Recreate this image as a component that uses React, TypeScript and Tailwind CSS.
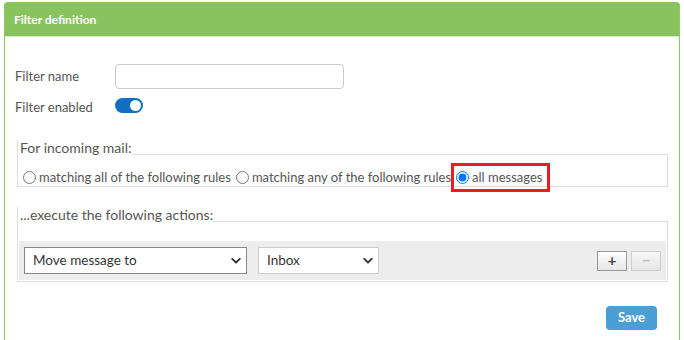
import { useState } from "react";

function Chevron() {
  return (
    <svg width="10" height="7" viewBox="0 0 10 7" className="pointer-events-none absolute right-[6px] top-1/2 -translate-y-1/2">
      <path d="M1.2 1.3 L5 5 L8.8 1.3" fill="none" stroke="#333" strokeWidth="1.8" strokeLinecap="round" strokeLinejoin="round" />
    </svg>
  );
}

function Legend({ text }: { text: string }) {
  return (
    <div className="flex items-end">
      <span className="pl-[2px] text-[14px] leading-[15px] text-[#555] border-l border-[#ddd]">{text}</span>
      <div className="flex-1 border-b border-[#ddd]" />
    </div>
  );
}

function App() {
  const [enabled, setEnabled] = useState(true);
  const [mode, setMode] = useState("all");

  const radio = (value: string, label: string, boxed = false) => (
    <label className="relative flex items-center cursor-pointer">
      <input
        type="radio"
        name="mode"
        checked={mode === value}
        onChange={() => setMode(value)}
        className="m-0 mr-[3px] w-[13px] h-[13px]"
      />
      <span>{label}</span>
      {boxed && (
        <span className="pointer-events-none absolute -left-[5px] -right-[8px] -top-[7px] -bottom-[7px] border-[3px] border-[#ec1c24]" />
      )}
    </label>
  );

  return (
    <div className="w-[684px] h-[340px] bg-white pt-[2px] overflow-hidden" style={{ fontFamily: "Lato, 'Open Sans', sans-serif" }}>
      <div className="ml-[4px] w-[676px] h-[400px] border border-[#8cc763] rounded-t-[3px]">
        <div className="h-[34px] bg-[#88c35d] border-b border-[#d6ebc8] px-[9px] flex items-center">
          <span className="text-[12px] font-bold text-white">Filter definition</span>
        </div>

        <div className="px-[10px] pt-[27px]">
          <div className="flex items-center">
            <span className="w-[100px] text-[13px] text-[#555]">Filter name</span>
            <input type="text" className="w-[229px] h-[25px] rounded-[4px] border border-[#ccc] outline-none px-2 text-[13px]" />
          </div>

          <div className="flex items-center mt-[9px] h-[15px]">
            <span className="w-[100px] text-[13px] text-[#555] translate-y-[2px]">Filter enabled</span>
            <button
              onClick={() => setEnabled(!enabled)}
              className={`w-[28px] h-[15px] rounded-full flex items-center px-[2px] ${enabled ? "bg-[#1170c4] justify-end" : "bg-[#bbb] justify-start"}`}
            >
              <span className="w-[11px] h-[11px] rounded-full bg-white" />
            </button>
          </div>

          <div className="ml-[2px] mr-[1px] mt-[27px]">
            <Legend text="For incoming mail:" />
            <div className="border-x border-b border-[#ddd] pt-[15px] pb-[1px] pl-[5px] flex items-center gap-[5px] text-[13px] text-[#555] leading-[15px]">
              {radio("rules", "matching all of the following rules")}
              {radio("any", "matching any of the following rules")}
              {radio("all", "all messages", true)}
            </div>
          </div>

          <div className="ml-[2px] mr-[1px] mt-[20px]">
            <Legend text="...execute the following actions:" />
            <div className="border-x border-b border-[#ddd] pt-[19px] px-[1px] pb-[1px]">
              <div className="bg-[#ededed] h-[39px] flex items-center px-[5px]">
                <div className="relative w-[223px] h-[27px]">
                  <select className="appearance-none w-full h-full border border-[#888] bg-white pl-[8px] text-[13.5px] text-[#333] outline-none">
                    <option>Move message to</option>
                    <option>Copy message to</option>
                    <option>Delete message</option>
                  </select>
                  <Chevron />
                </div>
                <div className="relative w-[121px] h-[27px] ml-[11px]">
                  <select className="appearance-none w-full h-full border border-[#ccc] bg-white pl-[8px] text-[13.5px] text-[#333] outline-none">
                    <option>Inbox</option>
                    <option>Sent</option>
                    <option>Trash</option>
                  </select>
                  <Chevron />
                </div>
                <div className="ml-auto flex gap-[4px]">
                  <button className="w-[30px] h-[20px] border border-[#999] bg-gradient-to-b from-white to-[#e6e6e6] flex items-center justify-center text-[#444] text-[15px] font-bold leading-none">
                    +
                  </button>
                  <button disabled className="w-[30px] h-[20px] border border-[#ccc] bg-gradient-to-b from-[#f7f7f7] to-[#e6e6e6] flex items-center justify-center text-[#bbb] text-[15px] font-bold leading-none">
                    −
                  </button>
                </div>
              </div>
            </div>
          </div>

          <div className="flex justify-end mt-[24px] mr-[12px]">
            <button className="w-[51px] h-[24px] rounded-[4px] bg-[#4a9fd6] text-white text-[13px] font-bold">Save</button>
          </div>
        </div>
      </div>
    </div>
  );
}

export default App;
